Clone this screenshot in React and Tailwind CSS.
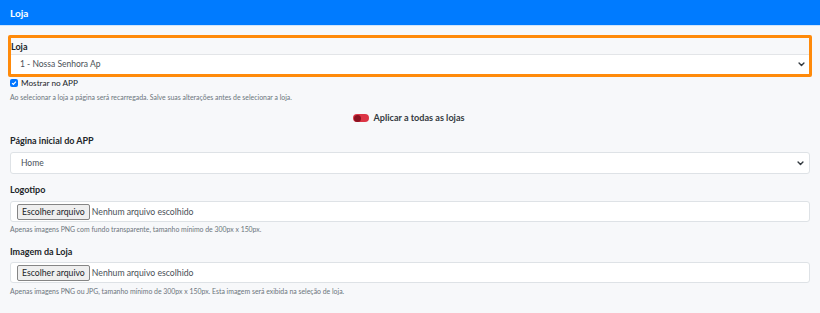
import React from "react";

function Chevron() {
  return (
    <svg width="7" height="5" viewBox="0 0 10 7" className="shrink-0">
      <path d="M1.5 1.5l3.5 3.5 3.5-3.5" stroke="#343a40" strokeWidth="2" fill="none" strokeLinecap="round" strokeLinejoin="round" />
    </svg>
  );
}

function FileInput() {
  return (
    <div className="flex h-[21px] items-center rounded-[3px] border border-[#dee2e6] bg-white pl-[6px] pt-[1px]">
      <div className="flex h-[16px] items-center rounded-[2px] border border-[#858585] bg-[#efefef] px-[4px] text-[8.7px] text-[#212529]">
        Escolher arquivo
      </div>
      <span className="ml-[2px] text-[8.7px] text-[#495057]">Nenhum arquivo escolhido</span>
    </div>
  );
}

export default function App() {
  return (
    <div
      className="flex h-[313px] w-[820px] flex-col overflow-hidden bg-[#f7f8fa] text-[#212529] leading-none"
      style={{ fontFamily: "Lato, 'Noto Sans', sans-serif" }}
    >
      <div className="flex h-[26px] shrink-0 items-center border-b border-[#cfe4fb] bg-[#007bff] px-[10px] text-[10px] font-bold text-white">
        Loja
      </div>
      <div className="flex flex-col px-[10px] pt-[9px]">
        <div className="-mx-[2px] rounded-[2px] border-[3px] border-[#ff8a0a]">
          <div className="flex h-[17px] items-center border-b border-[#e3e5e8] bg-[#f7f8fa] text-[9px] font-bold">
            Loja
          </div>
          <div className="flex h-[19px] items-center justify-between bg-white pl-[9px] pr-[4px] text-[8.5px] text-[#495057]">
            <span>1 - Nossa Senhora Ap</span>
            <Chevron />
          </div>
        </div>
        <div className="mt-[1px] flex h-[10px] items-center gap-[2px] text-[8.2px]">
          <span className="flex h-[8px] w-[8px] items-center justify-center rounded-[2px] bg-[#0075ff]">
            <svg width="6" height="6" viewBox="0 0 10 10">
              <path d="M1.8 5.2l2.2 2.2 4.2-4.8" stroke="white" strokeWidth="2" fill="none" />
            </svg>
          </span>
          <span className="ml-[1px]">Mostrar no APP</span>
        </div>
        <div className="mt-[4px] flex h-[10px] items-center text-[6.9px] text-[#6c757d]">
          Ao selecionar a loja a página será recarregada. Salve suas alterações antes de selecionar a loja.
        </div>
        <div className="mt-[10px] flex h-[12px] items-center justify-center gap-[4px] pr-[2px]">
          <span className="flex h-[8px] w-[16px] items-center rounded-full bg-[#dc3545]">
            <span className="ml-[1px] h-[7px] w-[7px] rounded-full bg-[#8b1220]" />
          </span>
          <span className="text-[9.1px] font-bold text-[#343a40]">Aplicar a todas as lojas</span>
        </div>
        <div className="mt-[10px] flex h-[12px] items-center text-[9px] font-bold">Página inicial do APP</div>
        <div className="mt-[6px] flex h-[22px] items-center justify-between rounded-[3px] border border-[#dee2e6] bg-white pl-[10px] pr-[5px] text-[8.5px] text-[#495057]">
          <span>Home</span>
          <Chevron />
        </div>
        <div className="mt-[9px] flex h-[12px] items-center text-[9px] font-bold">Logotipo</div>
        <div className="mt-[6px]">
          <FileInput />
        </div>
        <div className="mt-[2px] flex h-[10px] items-center text-[6.9px] text-[#6c757d]">
          Apenas imagens PNG com fundo transparente, tamanho mínimo de 300px x 150px.
        </div>
        <div className="mt-[11px] flex h-[12px] items-center text-[9px] font-bold">Imagem da Loja</div>
        <div className="mt-[5px]">
          <FileInput />
        </div>
        <div className="mt-[3px] flex h-[10px] items-center text-[6.9px] text-[#6c757d]">
          Apenas imagens PNG ou JPG, tamanho mínimo de 300px x 150px. Esta imagem será exibida na seleção de loja.
        </div>
      </div>
    </div>
  );
}
